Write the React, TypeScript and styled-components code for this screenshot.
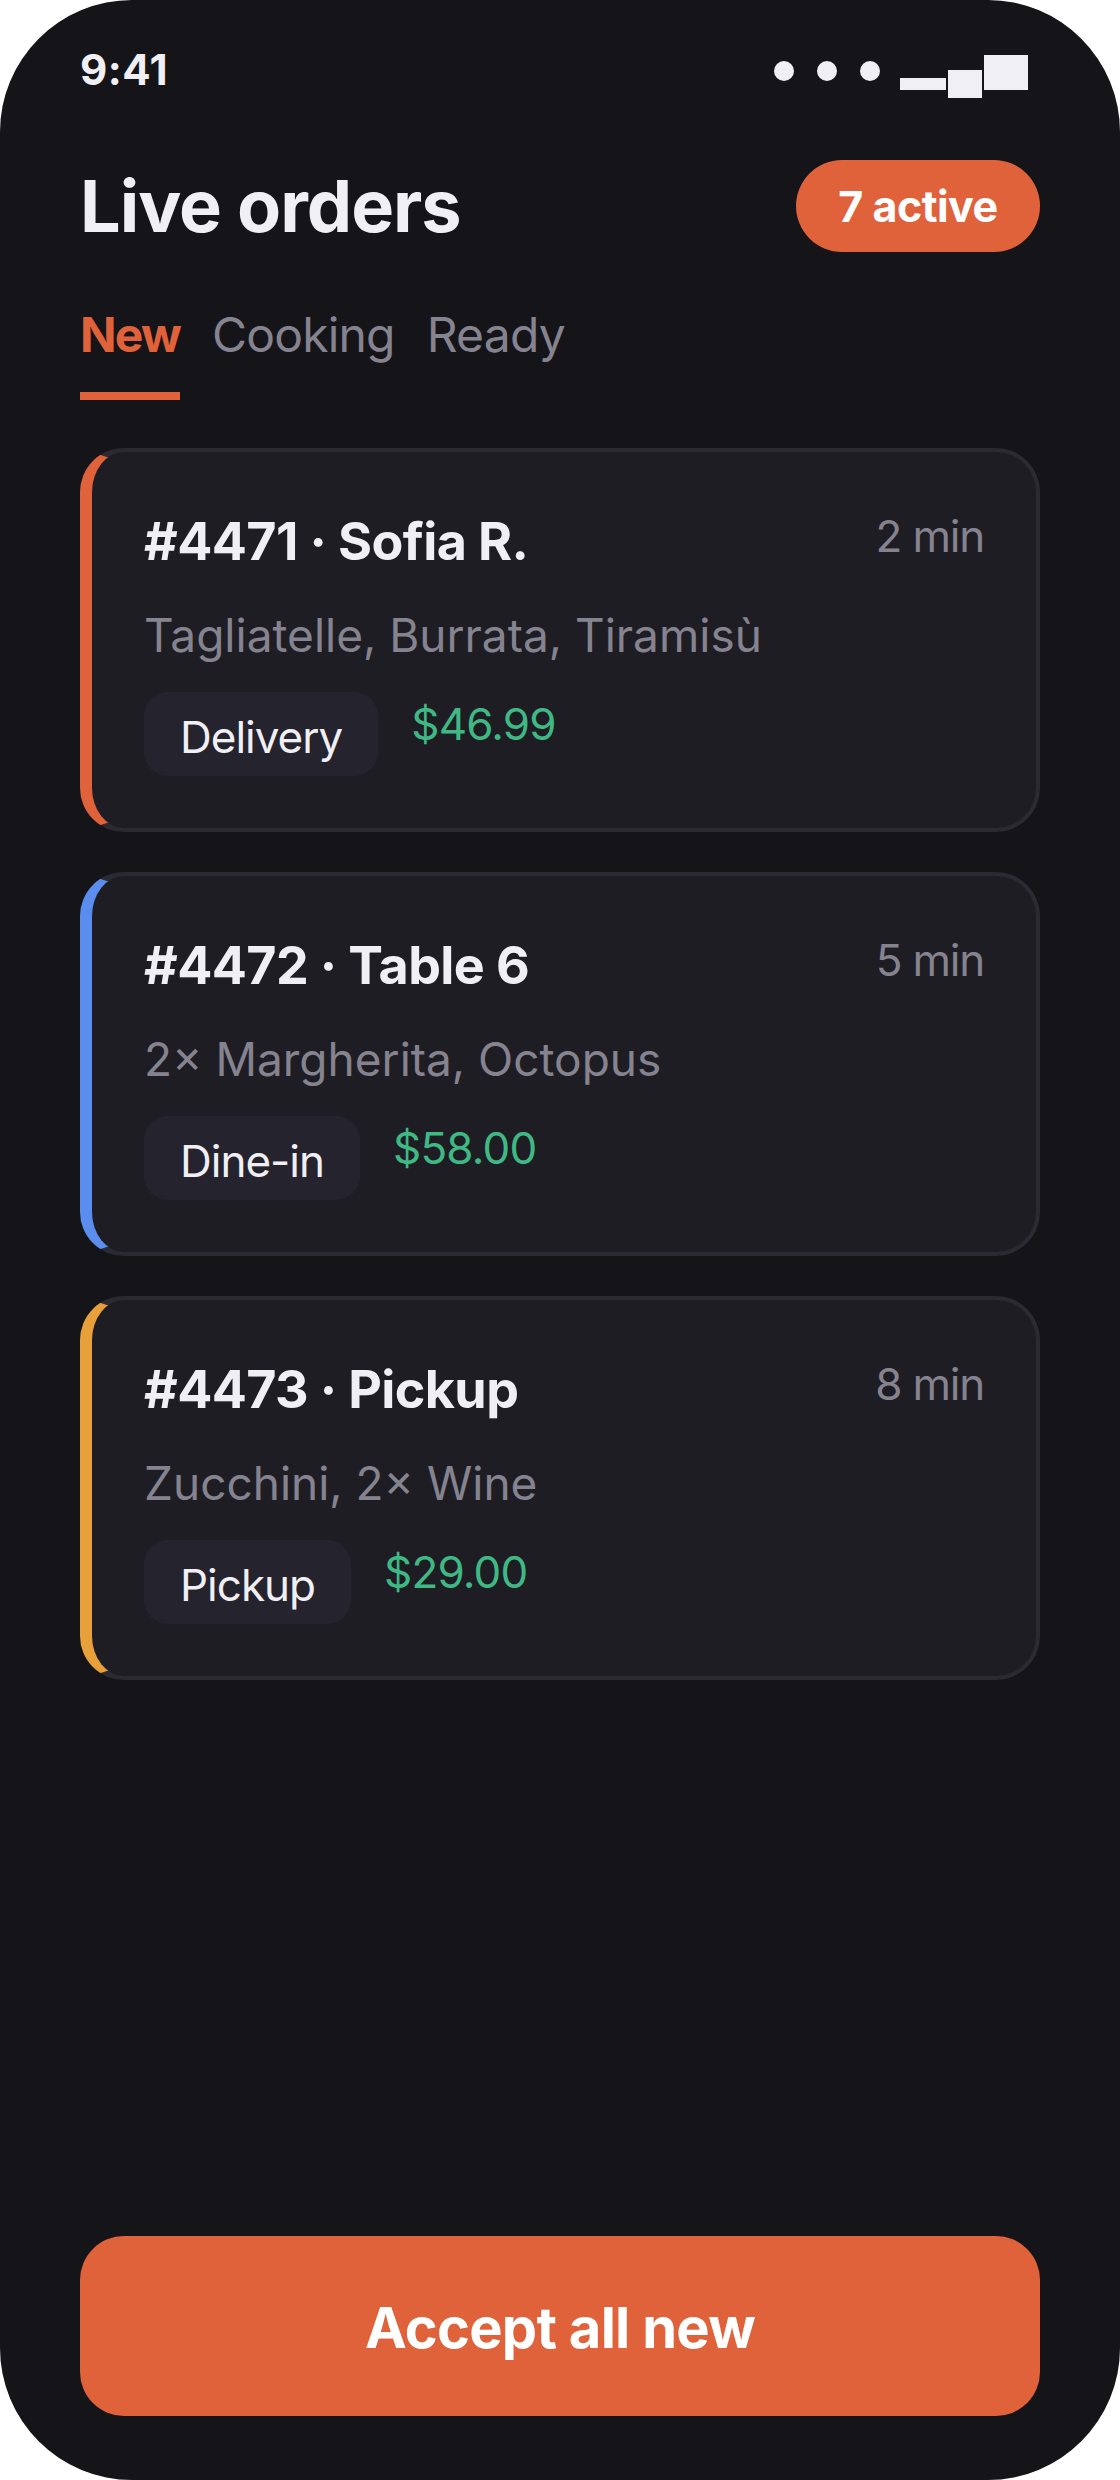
import React from "react";
import styled, { createGlobalStyle } from "styled-components";

const GlobalStyle = createGlobalStyle`
  html, body {
    margin: 0;
    padding: 0;
    background: #fff;
  }
  * {
    box-sizing: border-box;
  }
`;

const orders = [
  { id: "#4471 · Sofia R.", time: "2 min", items: "Tagliatelle, Burrata, Tiramisù", kind: "Delivery", price: "$46.99", accent: "#e0623a" },
  { id: "#4472 · Table 6", time: "5 min", items: "2× Margherita, Octopus", kind: "Dine-in", price: "$58.00", accent: "#5b8def" },
  { id: "#4473 · Pickup", time: "8 min", items: "Zucchini, 2× Wine", kind: "Pickup", price: "$29.00", accent: "#e8a13a" },
];

const App: React.FC = () => {
  return (
    <>
      <GlobalStyle />
      <Screen>
        <StatusBar>
          <Clock>9:41</Clock>
          <StatusIcons />
        </StatusBar>
        <Header>
          <Title>Live orders</Title>
          <ActiveBadge>7 active</ActiveBadge>
        </Header>
        <Tabs>
          <Tab $active>New</Tab>
          <Tab>Cooking</Tab>
          <Tab>Ready</Tab>
        </Tabs>
        <OrderList>
          {orders.map((order) => (
            <OrderCard key={order.id} $accent={order.accent}>
              <CardTop>
                <OrderName>{order.id}</OrderName>
                <OrderTime>{order.time}</OrderTime>
              </CardTop>
              <OrderItems>{order.items}</OrderItems>
              <CardMeta>
                <KindChip>{order.kind}</KindChip>
                <Price>{order.price}</Price>
              </CardMeta>
            </OrderCard>
          ))}
        </OrderList>
        <AcceptButton>Accept all new</AcceptButton>
      </Screen>
    </>
  );
};

const StatusIcons: React.FC = () => (
  <StatusSvg width="254" height="48" viewBox="0 0 254 48">
    <circle cx="10" cy="21" r="10" />
    <circle cx="53" cy="21" r="10" />
    <circle cx="96" cy="21" r="10" />
    <rect x="126" y="28" width="46" height="12" />
    <rect x="174" y="20" width="34" height="28" />
    <rect x="210" y="5" width="44" height="35" />
  </StatusSvg>
);

const Screen = styled.div`
  width: 1120px;
  height: 2480px;
  display: flex;
  flex-direction: column;
  padding: 0 80px 64px;
  border-radius: 132px;
  overflow: hidden;
  background: #151418;
  font-family: Inter, "Liberation Sans", sans-serif;
  color: #f0eff4;
`;

const StatusBar = styled.div`
  height: 160px;
  padding-top: 50px;
  display: flex;
  justify-content: space-between;
  align-items: flex-start;
`;

const Clock = styled.span`
  font-size: 42px;
  line-height: 40px;
  font-weight: 700;
  letter-spacing: 0.5px;
`;

const StatusSvg = styled.svg`
  display: block;
  margin-right: 12px;
  fill: #f0eff4;
`;

const Header = styled.div`
  height: 92px;
  display: flex;
  justify-content: space-between;
  align-items: center;
`;

const Title = styled.h1`
  margin: 0;
  font-size: 72px;
  line-height: 92px;
  font-weight: 700;
  letter-spacing: -1px;
`;

const ActiveBadge = styled.div`
  width: 244px;
  height: 92px;
  border-radius: 46px;
  background: #e0623a;
  color: #fff;
  display: flex;
  align-items: center;
  justify-content: center;
  font-size: 43px;
  font-weight: 700;
  letter-spacing: -0.5px;
`;

const Tabs = styled.div`
  margin-top: 40px;
  display: flex;
  gap: 32px;
`;

const Tab = styled.div<{ $active?: boolean }>`
  height: 108px;
  padding-top: 13px;
  font-size: 48px;
  line-height: 60px;
  font-weight: ${(p) => (p.$active ? 700 : 400)};
  letter-spacing: ${(p) => (p.$active ? "-1.8px" : "-0.8px")};
  color: ${(p) => (p.$active ? "#e0623a" : "#85838f")};
  border-bottom: 8px solid ${(p) => (p.$active ? "#e0623a" : "transparent")};
`;

const OrderList = styled.div`
  margin-top: 48px;
  flex: 1;
  display: flex;
  flex-direction: column;
  gap: 40px;
`;

const OrderCard = styled.div<{ $accent: string }>`
  height: 384px;
  padding: 60px 52px 0;
  background: #1f1d24;
  border: 4px solid #2b2931;
  border-left: 12px solid ${(p) => p.$accent};
  border-radius: 44px;
`;

const CardTop = styled.div`
  display: flex;
  justify-content: space-between;
  align-items: flex-start;
`;

const OrderName = styled.div`
  font-size: 52px;
  line-height: 60px;
  font-weight: 700;
  letter-spacing: -0.6px;
`;

const OrderTime = styled.div`
  margin-top: -2px;
  font-size: 44px;
  line-height: 52px;
  letter-spacing: -1.2px;
  color: #85838f;
`;

const OrderItems = styled.div`
  margin-top: 33px;
  font-size: 46px;
  line-height: 60px;
  color: #85838f;
`;

const CardMeta = styled.div`
  margin-top: 27px;
  display: flex;
  align-items: flex-start;
  gap: 33px;
`;

const KindChip = styled.div`
  height: 84px;
  padding: 0 36px;
  border-radius: 24px;
  background: #25232d;
  font-size: 44px;
  line-height: 90px;
  letter-spacing: -1px;
`;

const Price = styled.div`
  margin-top: 6px;
  font-size: 44px;
  line-height: 52px;
  letter-spacing: -0.8px;
  color: #3fb984;
`;

const AcceptButton = styled.button`
  flex: none;
  height: 180px;
  border: none;
  padding: 4px 0 0;
  border-radius: 44px;
  background: #e0623a;
  color: #fff;
  font-family: inherit;
  font-size: 56px;
  font-weight: 700;
  letter-spacing: -0.7px;
`;

export default App;
